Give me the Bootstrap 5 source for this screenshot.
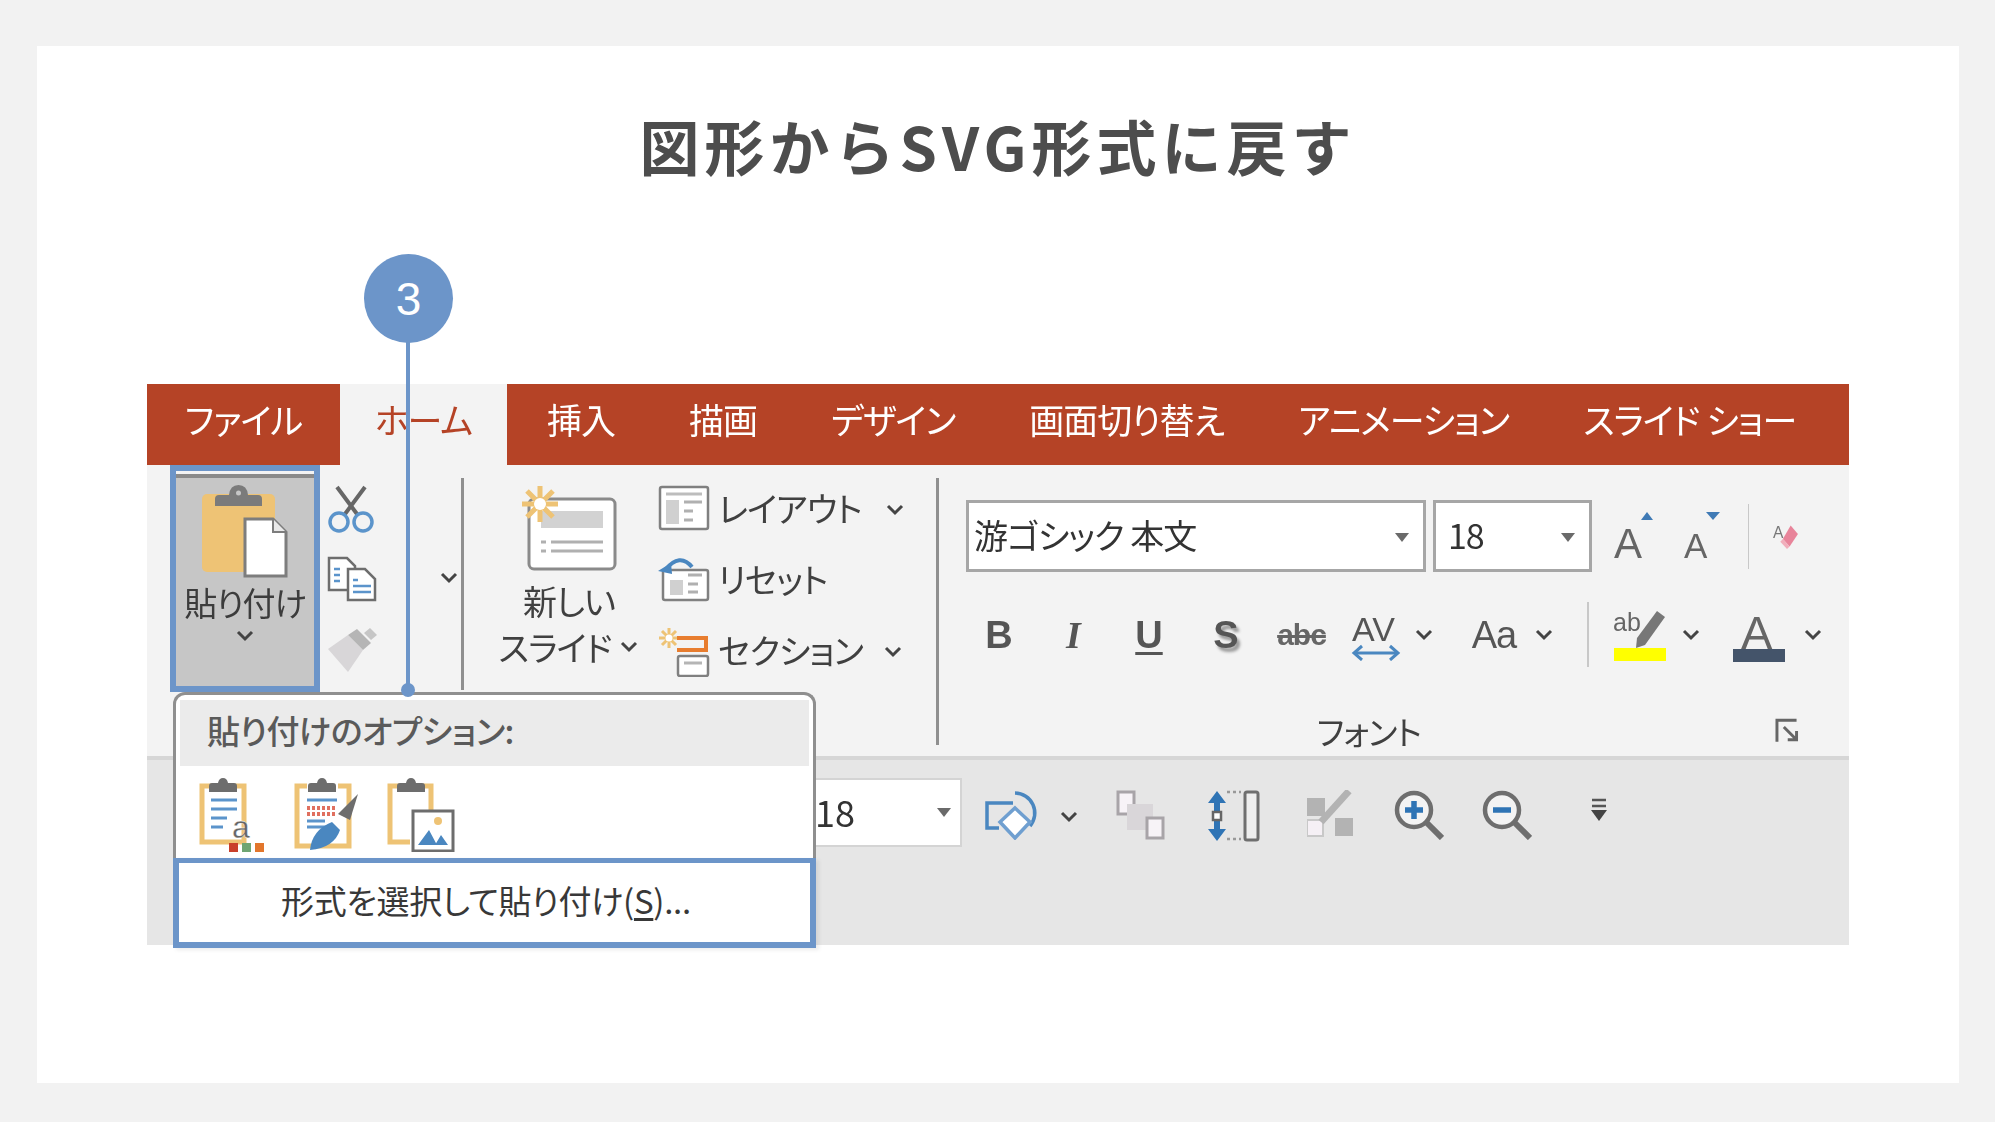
<!DOCTYPE html>
<html lang="ja">
<head>
<meta charset="UTF-8">
<meta name="viewport" content="width=device-width, initial-scale=1.0">
<title>図形からSVG形式に戻す</title>
<link href="https://cdn.jsdelivr.net/npm/bootstrap@5.3.0/dist/css/bootstrap.min.css" rel="stylesheet">
<style>
    body { background-color: #f2f2f2; margin: 0; height: 1122px; overflow: hidden; font-family: "Noto Sans CJK JP", "Noto Sans", sans-serif; font-feature-settings: "palt"; color: #404040; }
    .sheet { background-color: #fff; margin: 46px 36px 0 37px; height: 1037px; padding-top: 60px; }
    .sheet-title { font-family: "Noto Sans CJK JP", sans-serif; font-size: 60px; line-height: 78px; font-weight: 700; letter-spacing: 5px; color: #4d4d4d; margin: 0 0 200px; text-align: center; font-feature-settings: normal; }
    .shot { position: relative; margin: 0 110px; width: 1702px; height: 561px; }
    .shot-inner { filter: blur(.5px); }

    /* tabs */
    .tabbar { background-color: #b54326; height: 81px; }
    .rtab { color: #fff; font-size: 35px; line-height: 70px; padding: 0 37px; white-space: nowrap; letter-spacing: -1px; }
    .rtab-file { width: 193px; text-align: center; padding: 0; }
    .rtab-home { width: 167px; text-align: center; padding: 0; background-color: #f3f3f3; color: #b54326; height: 81px; margin-right: 3px; }

    /* ribbon */
    .ribbon { background-color: #f3f3f3; height: 295px; border-bottom: 4px solid #d6d6d6; }
    .rsep { width: 3px; background-color: #8f8f8f; margin-top: 13px; flex: none; }
    .rsep-a { height: 212px; }
    .rsep-b { height: 267px; }
    .paste-btn { width: 150px; height: 227px; margin-left: 23px; border: 6px solid #6c95c9; background-color: #c6c6c6; box-shadow: inset 0 3px 0 #f3f3f3, inset 0 7px 0 #8a8a8a; flex: none; font-size: 33px; line-height: 40px; letter-spacing: -1px; color: #3c3c3c; padding-top: 13px; }
    .paste-btn svg { display: block; }
    .small-col { width: 134px; margin-left: 7px; padding-top: 20px; flex: none; }
    .small-row { height: 71px; }
    .chev { display: block; flex: none; }
    .slide-col { width: 150px; margin-left: 30px; padding-top: 20px; flex: none; font-size: 34px; line-height: 46px; letter-spacing: -1px; color: #404040; }
    .slide-col svg.slide-ico { margin-bottom: 7px; }
    .slide-btns { margin-left: 14px; padding-top: 20px; width: 278px; flex: none; font-size: 34px; line-height: 46px; letter-spacing: -1px; }
    .slide-row { height: 71px; gap: 8px; }
    .font-group { padding: 35px 0 0 27px; width: 860px; flex: none; }
    .combo { background-color: #fff; border: 3px solid #a6a6a6; height: 72px; font-size: 34px; line-height: 64px; padding-left: 5px; position: relative; color: #333; flex: none; letter-spacing: -1px; }
    .combo-name { width: 460px; }
    .combo-size { width: 159px; margin-left: 7px; padding-left: 12px; }
    .caret-down { position: absolute; top: 30px; width: 0; height: 0; border-left: 7px solid transparent; border-right: 7px solid transparent; border-top: 9px solid #6a6a6a; }
    .combo-name .caret-down { right: 14px; }
    .combo-size .caret-down { right: 14px; }
    .grow-a { font-family: "Liberation Sans", sans-serif; color: #555; line-height: 1; flex: none; }
    .row-one-tools { gap: 0; }
    .fmt-row { display: grid; grid-template-columns: 74px 75px 76px 78px 73px 76px 20px 24px 72px 28px 60px 46px 54px 82px 26px; height: 60px; margin: 30px 0 0 -4px; align-items: center; justify-items: center; }
    .fb { font-family: "Liberation Sans", sans-serif; font-size: 38px; line-height: 1; color: #555; }
    .fb-b { font-weight: 700; }
    .fb-i { font-family: "Liberation Serif", serif; font-style: italic; font-weight: 700; }
    .fb-u { font-weight: 700; text-decoration: underline; text-underline-offset: 4px; }
    .fb-s { font-weight: 700; text-shadow: 3px 4px 3px #9a9a9a; }
    .fb-abc { font-size: 30px; text-decoration: line-through; letter-spacing: -1px; font-weight: 700; color: #666; }
    .fb-aa { font-size: 38px; letter-spacing: -1px; }
    .fmt-sep { width: 2px; height: 65px; background-color: #c8c8c8; }
    .font-label { height: 34px; margin: 52px 0 0 -4px; font-size: 33px; line-height: 34px; letter-spacing: -1px; color: #404040; }
    .font-label span { width: 830px; text-align: center; }

    /* bottom strip */
    .bottom-strip { background-color: #e6e6e6; height: 185px; padding: 18px 0 0 530px; }
    .combo-flat { width: 285px; height: 69px; background-color: #fff; border: 2px solid #d4d4d4; border-left: 0; padding-left: 138px; font-size: 36px; line-height: 62px; position: relative; color: #333; flex: none; }
    .combo-flat .caret-down { right: 9px; top: 28px; }
    .strip-ico { display: block; flex: none; margin-top: 12px; }

    /* popup menu */
    .paste-menu { position: absolute; left: 26px; top: 308px; width: 643px; background-color: #fff; border: 3px solid #8f8f8f; border-bottom: 0; border-radius: 12px 12px 0 0; padding: 5px 4px 0; }
    .paste-head { background-color: #ebebeb; height: 66px; font-size: 33px; line-height: 60px; font-weight: 500; padding-left: 27px; color: #5a5a5a; letter-spacing: -.5px; }
    .paste-icons { height: 92px; padding: 12px 0 0 19px; gap: 25px; }
    .paste-special { margin: 0 -7px; height: 90px; border: 6px solid #6c95c9; border-top-width: 5px; background-color: #fff; font-size: 33px; line-height: 74px; text-align: left; padding-left: 102px; color: #383838; letter-spacing: -.3px; box-shadow: 3px 2px 4px rgba(0,0,0,.08); }
    .paste-special u { text-underline-offset: 4px; }

    /* step marker */
    .step-dot { position: absolute; left: 217px; top: -130px; width: 89px; height: 89px; border-radius: 50%; background-color: #6c95c9; color: #fff; font-family: "Liberation Sans", sans-serif; font-size: 46px; line-height: 91px; text-align: center; }
    .step-line { position: absolute; left: 259px; top: -42px; width: 4px; height: 349px; background-color: #6c95c9; }
    .step-end { position: absolute; left: 254px; top: 299px; width: 14px; height: 14px; border-radius: 50%; background-color: #6c95c9; }
</style>
</head>
<body>
<svg width="0" height="0" class="position-absolute">
    <symbol id="chev" viewBox="0 0 20 12"><path d="M3 2l7 7 7-7" fill="none" stroke="#444" stroke-width="3"/></symbol>
</svg>
<div class="sheet">
    <h1 class="sheet-title">図形からSVG形式に戻す</h1>
    <div class="shot">
        <div class="shot-inner">
            <div class="tabbar d-flex">
                <div class="rtab rtab-file">ファイル</div>
                <div class="rtab rtab-home">ホーム</div>
                <div class="rtab">挿入</div>
                <div class="rtab">描画</div>
                <div class="rtab">デザイン</div>
                <div class="rtab">画面切り替え</div>
                <div class="rtab">アニメーション</div>
                <div class="rtab">スライド ショー</div>
            </div>

            <div class="ribbon d-flex">
                <div class="paste-btn d-flex flex-column align-items-center">
                    <svg width="86" height="94" viewBox="0 0 86 94">
                        <rect x="0" y="10" width="73" height="78" rx="5" fill="#eec375"/>
                        <path d="M13 22v-7q0-4 4-4h10q1-10 9.500-10t9.500 10h10q4 0 4 4v7z" fill="#7b7b7b"/>
                        <circle cx="36.500" cy="9" r="2.500" fill="#c6c6c6"/>
                        <path d="M43 35h28l13 13v44H43z" fill="#fff" stroke="#7d7d7d" stroke-width="3"/>
                        <path d="M71 35v13h13" fill="#e8e8e8" stroke="#7d7d7d" stroke-width="2"/>
                    </svg>
                    <div class="mt-1">貼り付け</div>
                    <svg class="chev mt-2" width="20" height="12"><use href="#chev"/></svg>
                </div>
                <div class="small-col">
                    <div class="small-row d-flex">
                        <svg width="48" height="50" viewBox="0 0 48 50">
                            <path d="M10 2l20 27M38 2L18 29" stroke="#666" stroke-width="4" fill="none"/>
                            <circle cx="12" cy="37" r="9" fill="none" stroke="#5b94cb" stroke-width="3.500"/>
                            <circle cx="36" cy="37" r="9" fill="none" stroke="#5b94cb" stroke-width="3.500"/>
                        </svg>
                    </div>
                    <div class="small-row d-flex align-items-start">
                        <svg width="50" height="46" viewBox="0 0 50 46">
                            <path d="M2 2h18l8 8v24H2z" fill="#fff" stroke="#6d6d6d" stroke-width="2.500"/>
                            <path d="M21 13h17l10 10v21H21z" fill="#fff" stroke="#6d6d6d" stroke-width="2.500"/>
                            <path d="M7 13h6M7 19h6M7 25h6M26 24h5M26 30h18M26 36h18" stroke="#5b94cb" stroke-width="2.500"/>
                        </svg>
                        <svg class="chev" style="margin:16px 0 0 62px" width="20" height="12"><use href="#chev"/></svg>
                    </div>
                    <div class="small-row d-flex">
                        <svg width="50" height="46" viewBox="0 0 50 46">
                            <path d="M1 22L21 8l15 15-15 22z" fill="#d8d6d8"/>
                            <path d="M21 8l9-6 14 14-8 7z" fill="#b5b5b5"/>
                            <path d="M37 6l6-5 7 7-6 5z" fill="#c6c6c6"/>
                        </svg>
                    </div>
                </div>
                <div class="rsep rsep-a"></div>

                <div class="slide-col d-flex flex-column align-items-center">
                    <svg class="slide-ico" width="96" height="86" viewBox="0 0 96 86">
                        <rect x="8" y="14" width="86" height="70" rx="5" fill="#fff" stroke="#8a8a8a" stroke-width="3"/>
                        <rect x="20" y="26" width="62" height="17" fill="#d2d2d2"/>
                        <path d="M20 57h5M30 57h52M20 66h5M30 66h52" stroke="#b0b0b0" stroke-width="3"/>
                        <g stroke="#eec375" stroke-width="5"><path d="M19 1v36M1 19h36M6 6l26 26M32 6L6 32"/></g>
                        <circle cx="19" cy="19" r="6" fill="#fff"/>
                    </svg>
                    <div class="text-center">新しい</div>
                    <div class="d-flex align-items-center gap-2 text-nowrap">スライド<svg class="chev" width="20" height="12"><use href="#chev"/></svg></div>
                </div>
                <div class="slide-btns">
                    <div class="slide-row d-flex align-items-start">
                        <svg width="52" height="46" viewBox="0 0 52 46" class="flex-none">
                            <rect x="2" y="2" width="48" height="42" rx="2" fill="#fff" stroke="#808080" stroke-width="2.500"/>
                            <path d="M8 9h36" stroke="#bdbdbd" stroke-width="3"/>
                            <rect x="8" y="15" width="13" height="24" fill="#d0d0d0"/>
                            <path d="M26 17h18M26 26h9M26 35h9" stroke="#b0b0b0" stroke-width="3"/>
                        </svg>
                        <span class="text-nowrap">レイアウト</span>
                        <svg class="chev" style="margin:19px 0 0 16px" width="20" height="12"><use href="#chev"/></svg>
                    </div>
                    <div class="slide-row d-flex align-items-start">
                        <svg width="52" height="46" viewBox="0 0 52 46">
                            <rect x="5" y="14" width="45" height="30" rx="2" fill="#fff" stroke="#808080" stroke-width="2.500"/>
                            <rect x="12" y="24" width="13" height="15" fill="#d0d0d0"/>
                            <path d="M30 19h14M30 28h10M30 36h10" stroke="#b0b0b0" stroke-width="3"/>
                            <path d="M7 14Q22-4 34 11" fill="none" stroke="#4a87c0" stroke-width="4"/>
                            <path d="M0 15l13-8 1 11z" fill="#4a87c0"/>
                        </svg>
                        <span class="text-nowrap">リセット</span>
                    </div>
                    <div class="slide-row d-flex align-items-start">
                        <svg width="52" height="50" viewBox="0 0 52 50">
                            <g stroke="#eec375" stroke-width="3"><path d="M11 1v20M1 11h20M4 4l14 14M18 4L4 18"/></g>
                            <circle cx="11" cy="11" r="3.500" fill="#fff"/>
                            <path d="M19 11h29v12H19" fill="none" stroke="#e87d2f" stroke-width="4"/>
                            <rect x="20" y="29" width="30" height="20" rx="2" fill="#fff" stroke="#808080" stroke-width="2.500"/>
                            <path d="M26 36h18" stroke="#b5b5b5" stroke-width="3"/>
                        </svg>
                        <span class="text-nowrap">セクション</span>
                        <svg class="chev" style="margin:19px 0 0 12px" width="20" height="12"><use href="#chev"/></svg>
                    </div>
                </div>
                <div class="rsep rsep-b"></div>

                <div class="font-group">
                    <div class="d-flex row-one-tools align-items-center">
                        <div class="combo combo-name">游ゴシック 本文<i class="caret-down"></i></div>
                        <div class="combo combo-size">18<i class="caret-down"></i></div>
                        <div class="grow-a ms-3 d-flex align-items-start">
                            <svg width="58" height="48" viewBox="0 0 58 48">
                                <text x="6" y="46" font-family="Liberation Sans" font-size="42" fill="#666">A</text>
                                <path d="M33 8l6-8 6 8z" fill="#3f7ab5"/>
                            </svg>
                        </div>
                        <div class="grow-a ms-3 d-flex align-items-start">
                            <svg width="50" height="48" viewBox="0 0 50 48">
                                <text x="2" y="46" font-family="Liberation Sans" font-size="35" fill="#666">A</text>
                                <path d="M24 0h14l-7 8z" fill="#3f7ab5"/>
                            </svg>
                        </div>
                        <div class="fmt-sep ms-3"></div>
                        <svg class="ms-4" width="50" height="52" viewBox="0 0 50 52">
                            <text x="0" y="30" font-family="Liberation Sans" font-size="30" fill="#777">A</text>
                            <path d="M34 6l14 16-16 24-13-14z" fill="#e8849a"/>
                            <path d="M19 32l13 14-5 5-13-14z" fill="#f1aebb"/>
                        </svg>
                    </div>
                    <div class="fmt-row">
                        <span class="fb fb-b">B</span>
                        <span class="fb fb-i">I</span>
                        <span class="fb fb-u">U</span>
                        <span class="fb fb-s">S</span>
                        <span class="fb fb-abc">abc</span>
                        <svg width="50" height="52" viewBox="0 0 50 52">
                            <text x="1" y="32" font-family="Liberation Sans" font-size="34" fill="#555">AV</text>
                            <path d="M4 44h42" stroke="#4a87c0" stroke-width="3"/>
                            <path d="M11 37l-8 7 8 7M39 37l8 7-8 7" fill="none" stroke="#4a87c0" stroke-width="3"/>
                        </svg>
                        <svg class="chev" width="20" height="12"><use href="#chev"/></svg>
                        <span></span>
                        <span class="fb fb-aa">Aa</span>
                        <svg class="chev" width="20" height="12"><use href="#chev"/></svg>
                        <span class="fmt-sep"></span>
                        <svg width="56" height="54" viewBox="0 0 56 54">
                            <text x="0" y="23" font-family="Liberation Sans" font-size="25" fill="#666">ab</text>
                            <path d="M44 3l8 6-20 28-9 3 1-10z" fill="#777"/>
                            <rect x="1" y="40" width="52" height="13" fill="#ffff00"/>
                        </svg>
                        <svg class="chev" width="20" height="12"><use href="#chev"/></svg>
                        <svg width="54" height="56" viewBox="0 0 54 56">
                            <text x="9" y="42" font-family="Liberation Sans" font-size="47" fill="#666">A</text>
                            <rect x="1" y="42" width="52" height="13" fill="#44546a"/>
                        </svg>
                        <svg class="chev" width="20" height="12"><use href="#chev"/></svg>
                    </div>
                    <div class="font-label d-flex align-items-center">
                        <span>フォント</span>
                        <svg width="24" height="26" viewBox="0 0 24 26">
                            <path d="M2 24V2h20" fill="none" stroke="#666" stroke-width="3"/>
                            <path d="M9 9l13 13M22 13v9h-9" fill="none" stroke="#666" stroke-width="3"/>
                        </svg>
                    </div>
                </div>
            </div>

            <div class="bottom-strip d-flex">
                <div class="combo-flat">18<i class="caret-down"></i></div>
                <svg class="strip-ico" style="margin-left:23px" width="54" height="50" viewBox="0 0 54 50">
                    <path d="M14 38H2V13h26" fill="none" stroke="#4a87c0" stroke-width="3.500"/>
                    <path d="M30 3a20 20 0 0 1 15 33" fill="none" stroke="#4a87c0" stroke-width="3.500"/>
                    <path d="M30 18l15 14-15 16-15-16z" fill="#fff" stroke="#6f9fd0" stroke-width="3.500"/>
                </svg>
                <svg class="chev strip-ico" style="margin:33px 0 0 20px" width="20" height="12"><use href="#chev"/></svg>
                <svg class="strip-ico" style="margin-left:37px" width="50" height="50" viewBox="0 0 50 50">
                    <rect x="2" y="2" width="16" height="22" fill="#f7f3f7" stroke="#a8a4a8" stroke-width="3"/>
                    <rect x="11" y="14" width="26" height="26" fill="#d9d6d9"/>
                    <rect x="31" y="28" width="16" height="20" fill="#f7f3f7" stroke="#a8a4a8" stroke-width="3"/>
                </svg>
                <svg class="strip-ico" style="margin-left:41px" width="54" height="52" viewBox="0 0 54 52">
                    <path d="M10 1L1 13h6v8h6v-8h6zM10 51L1 39h6v-8h6v8h6z" fill="#2f74b5"/>
                    <rect x="6" y="22" width="8" height="8" fill="#fff" stroke="#666" stroke-width="2.500"/>
                    <path d="M20 2h14M20 49h14" stroke="#999" stroke-width="2.500" stroke-dasharray="3 3"/>
                    <rect x="38" y="2" width="13" height="48" rx="2" fill="#eee" stroke="#6f6f6f" stroke-width="3"/>
                </svg>
                <svg class="strip-ico" style="margin-left:46px" width="46" height="48" viewBox="0 0 46 48">
                    <rect x="0" y="8" width="18" height="18" fill="#b3b3b3"/>
                    <rect x="28" y="28" width="18" height="18" fill="#b3b3b3"/>
                    <rect x="0" y="30" width="16" height="16" fill="#f5f0f5" stroke="#c8c8c8" stroke-width="2"/>
                    <path d="M14 32L42 1" stroke="#b3b3b3" stroke-width="7"/>
                </svg>
                <svg class="strip-ico" style="margin-left:41px" width="50" height="50" viewBox="0 0 50 50">
                    <circle cx="20" cy="20" r="17" fill="#f3f3f3" stroke="#6e6e6e" stroke-width="4.500"/>
                    <path d="M33 33l15 15" stroke="#6e6e6e" stroke-width="6"/>
                    <path d="M20 11v18M11 20h18" stroke="#2f74b5" stroke-width="5.500"/>
                </svg>
                <svg class="strip-ico" style="margin-left:38px" width="50" height="50" viewBox="0 0 50 50">
                    <circle cx="20" cy="20" r="17" fill="#f3f3f3" stroke="#6e6e6e" stroke-width="4.500"/>
                    <path d="M33 33l15 15" stroke="#6e6e6e" stroke-width="6"/>
                    <path d="M11 20h18" stroke="#2f74b5" stroke-width="5.500"/>
                </svg>
                <svg class="strip-ico" style="margin:20px 0 0 58px" width="18" height="24" viewBox="0 0 18 24">
                    <path d="M2 2h14M2 8h14" stroke="#555" stroke-width="2.500"/>
                    <path d="M1 12h16l-8 11z" fill="#444"/>
                </svg>
            </div>
        </div>

        <div class="paste-menu">
            <div class="paste-head">貼り付けのオプション:</div>
            <div class="paste-icons d-flex align-items-start">
                <svg width="70" height="74" viewBox="0 0 70 74">
                    <path d="M13 8H3v56h42V8H34" fill="#fff" stroke="#eec375" stroke-width="5"/>
                    <path d="M10 14v-6q0-3 3-3h6q1-5 5-5t5 5h6q3 0 3 3v6z" fill="#6d6d6d"/>
                    <path d="M12 22h26M12 31h26M12 40h16M12 49h12" stroke="#5b94cb" stroke-width="3"/>
                    <text x="33" y="60" font-family="Liberation Sans" font-size="32" fill="#666" stroke="#fff" stroke-width=".3">a</text>
                    <rect x="30" y="65" width="9" height="9" fill="#c9402b"/>
                    <rect x="43" y="65" width="9" height="9" fill="#6fa572"/>
                    <rect x="56" y="65" width="9" height="9" fill="#e2762c"/>
                </svg>
                <svg width="68" height="74" viewBox="0 0 68 74">
                    <path d="M13 8H3v60h52V8H44" fill="#fff" stroke="#eec375" stroke-width="5"/>
                    <path d="M14 14v-6q0-3 3-3h6q1-5 5-5t5 5h6q3 0 3 3v6z" fill="#6d6d6d"/>
                    <path d="M13 22h30M13 49h20" stroke="#5b94cb" stroke-width="3"/>
                    <path d="M13 30h28M13 36h28" stroke="#e0705f" stroke-width="4" stroke-dasharray="3 2"/>
                    <path d="M13 43h18" stroke="#5b94cb" stroke-width="3"/>
                    <path d="M44 36l20-20-8 26z" fill="#6d6d6d"/>
                    <path d="M16 72q2-20 22-28l8 8q-6 18-30 20z" fill="#4a87c0"/>
                </svg>
                <svg width="68" height="74" viewBox="0 0 68 74">
                    <path d="M13 8H3v56h20M44 32V8H36" fill="none" stroke="#eec375" stroke-width="5"/>
                    <path d="M10 14v-6q0-3 3-3h6q1-5 5-5t5 5h6q3 0 3 3v6z" fill="#6d6d6d"/>
                    <rect x="26" y="33" width="40" height="40" fill="#fff" stroke="#6d6d6d" stroke-width="3"/>
                    <circle cx="51" cy="43" r="4" fill="#eec375"/>
                    <path d="M31 67l11-15 8 15zM48 67l6-10 7 10z" fill="#4a87c0"/>
                </svg>
            </div>
            <div class="paste-special">形式を選択して貼り付け(<u>S</u>)...</div>
        </div>

        <div class="step-line"></div>
        <div class="step-end"></div>
        <div class="step-dot">3</div>
    </div>
</div>
<script src="https://cdn.jsdelivr.net/npm/bootstrap@5.3.0/dist/js/bootstrap.bundle.min.js"></script>
</body>
</html>
